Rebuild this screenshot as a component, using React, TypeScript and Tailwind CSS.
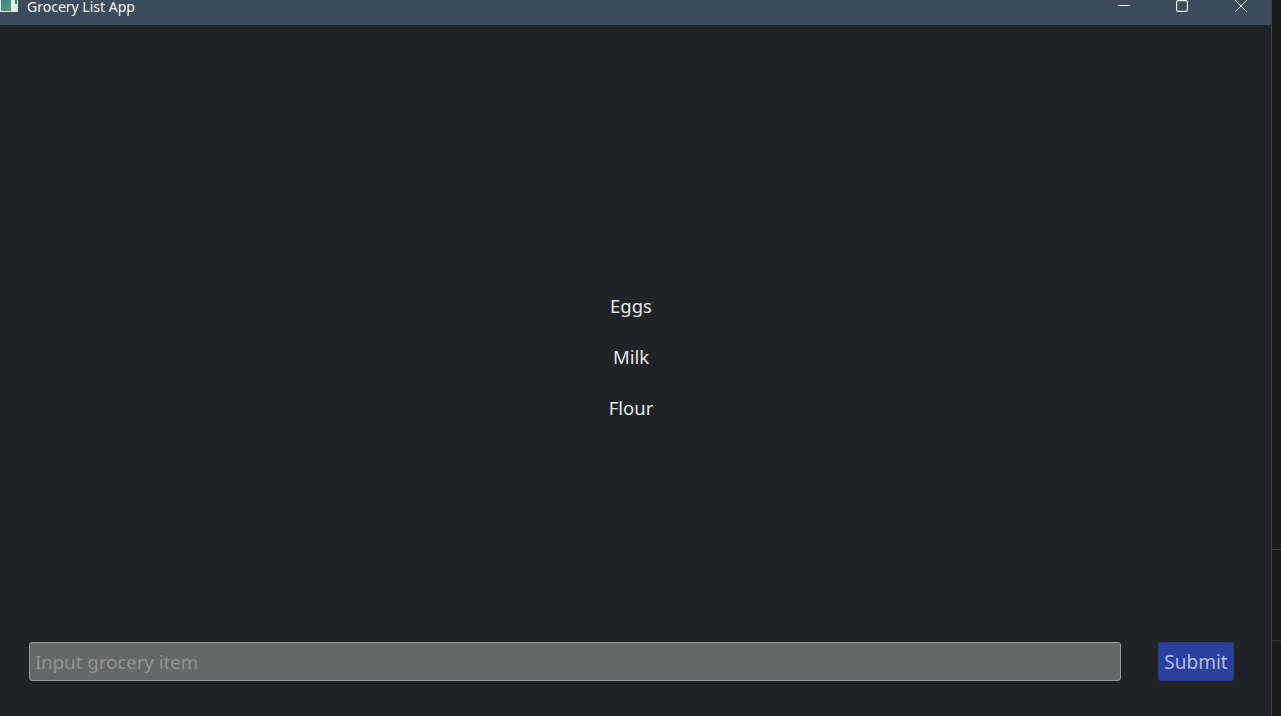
export default function App() {
  const font = "font-['Noto_Sans','Open_Sans',sans-serif]";
  return (
    <div className={`flex h-[716px] w-[1281px] overflow-hidden bg-[#1a1a1b] ${font}`}>
      <div className="flex w-[1272px] flex-col border-r border-[#3f4347] bg-[#212226]">
        <div className="flex h-[25px] shrink-0 items-start bg-[#3d4c5a]">
          <svg width="19" height="12" viewBox="0 0 19 12" className="shrink-0">
            <defs>
              <linearGradient id="g" x1="0" y1="0" x2="1" y2="1">
                <stop offset="0" stopColor="#3f7f9a" />
                <stop offset="1" stopColor="#55a06a" />
              </linearGradient>
            </defs>
            <rect x="0" y="0" width="18" height="12" fill="#e8ecee" />
            <rect x="1" y="0" width="10" height="11" fill="url(#g)" />
            <rect x="15" y="0" width="2" height="4" fill="#2f7f6a" />
          </svg>
          <span className="ml-2 text-[14px] leading-[14px] text-[#f2f4f5]">Grocery List App</span>
          <div className="ml-auto flex items-start pr-[23px]">
            <svg width="12" height="12" viewBox="0 0 12 12">
              <path d="M0 5.5H12" stroke="#f2f4f5" strokeWidth="1" />
            </svg>
            <svg width="12" height="12" viewBox="0 0 12 12" className="ml-[46px]">
              <rect x="0.6" y="0.6" width="10.8" height="10.8" rx="1.5" fill="none" stroke="#f2f4f5" strokeWidth="1.2" />
            </svg>
            <svg width="14" height="13" viewBox="0 0 14 13" className="ml-[46px]">
              <path d="M1 0L13 12M13 0L1 12" stroke="#f2f4f5" strokeWidth="1" />
            </svg>
          </div>
        </div>
        <div className="flex flex-1 flex-col items-center justify-center gap-[23px] pr-[9px] pt-[47px] text-[18.5px] leading-[28px] text-[#e6e7e8]">
          <div>Eggs</div>
          <div>Milk</div>
          <div>Flour</div>
        </div>
        <div className="flex items-center pb-[35px] pl-[29px] pr-[37px]">
          <input
            placeholder="Input grocery item"
            className="h-[39px] w-[1092px] rounded-[3px] border border-[#9a9c9b] bg-[#666867] px-[5px] text-[18.6px] text-white outline-none placeholder:text-[#929493]"
          />
          <button className="ml-auto h-[39px] w-[76px] rounded-[3px] border border-[#2a3a8c] bg-[#2b3f9f] pt-[1px] text-[19px] text-[#b6bde0]">Submit</button>
        </div>
      </div>
      <div className="relative flex-1">
        <div className="absolute left-0 right-0 top-[549px] h-px bg-[#3a3b3d]" />
        <div className="absolute left-0 right-0 top-[640px] h-px bg-[#3a3b3d]" />
      </div>
    </div>
  );
}
